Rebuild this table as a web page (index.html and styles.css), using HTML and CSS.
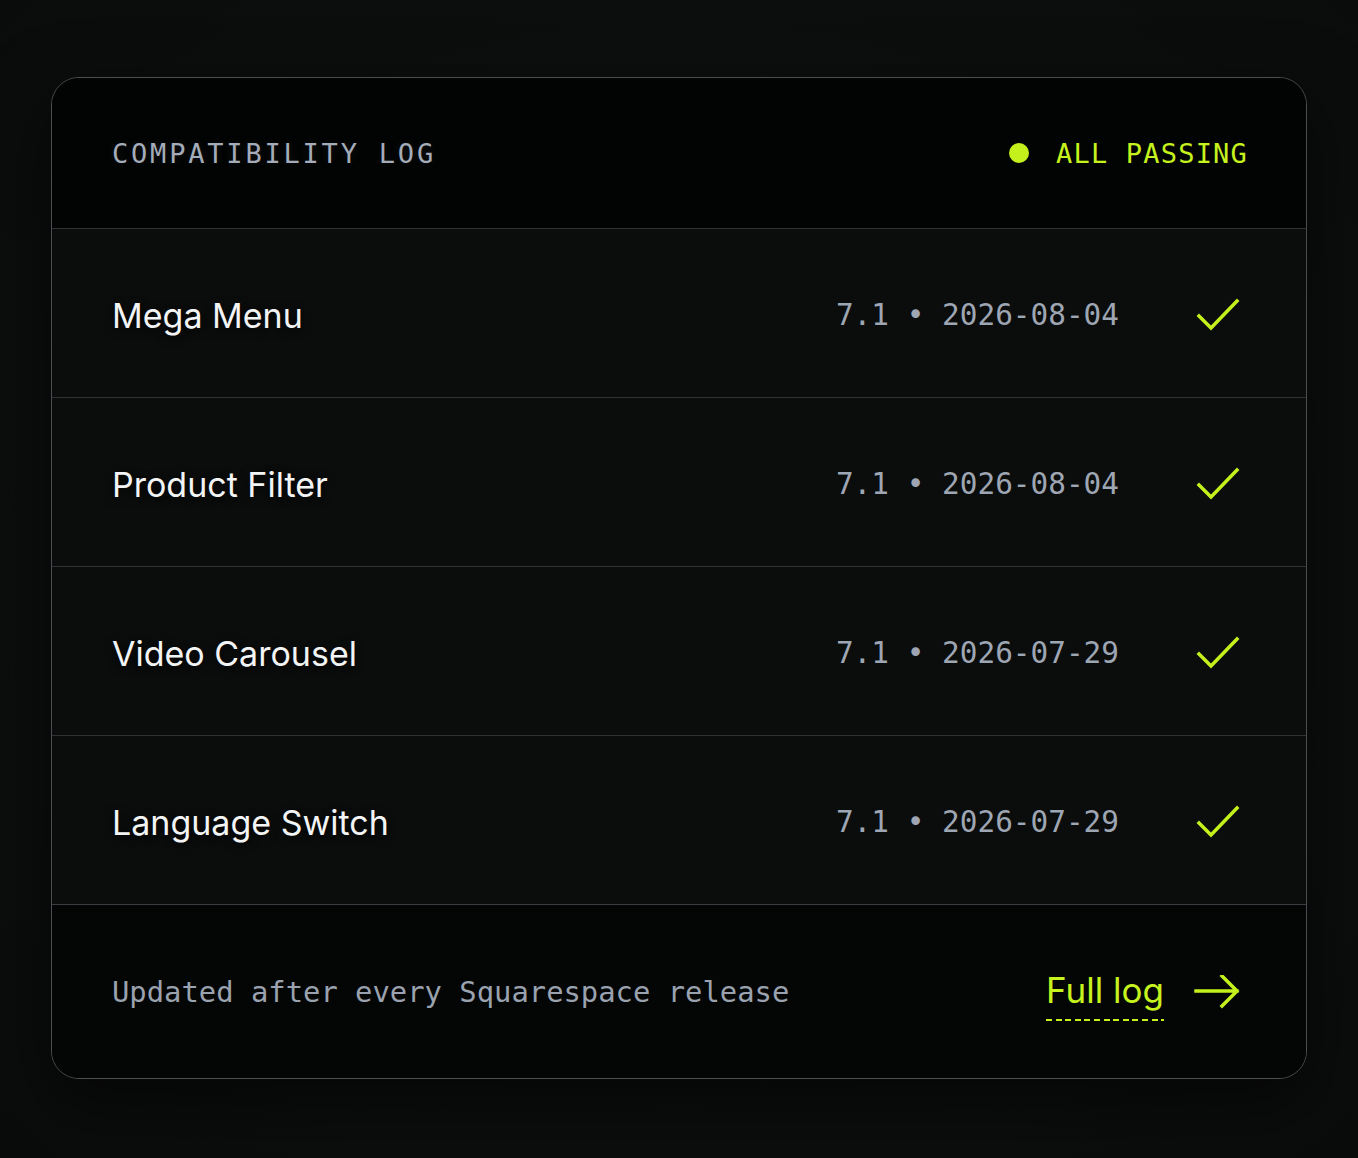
FILE: index.html
```html
<!DOCTYPE html>
<html lang="en">
<head>
<meta charset="utf-8">
<title>Compatibility Log</title>
<link rel="stylesheet" href="styles.css">
</head>
<body>
<section class="card">
  <header class="card-head">
    <h2 class="title">COMPATIBILITY LOG</h2>
    <div class="status"><span class="dot"></span><span class="status-text">ALL PASSING</span></div>
  </header>
  <ul class="rows">
    <li class="row">
      <span class="name">Mega Menu</span>
      <span class="meta">7.1 • 2026-08-04</span>
      <svg class="check" viewBox="0 0 44 34" width="44" height="34"><path d="M3 18 L15 30 L41 3"/></svg>
    </li>
    <li class="row">
      <span class="name">Product Filter</span>
      <span class="meta">7.1 • 2026-08-04</span>
      <svg class="check" viewBox="0 0 44 34" width="44" height="34"><path d="M3 18 L15 30 L41 3"/></svg>
    </li>
    <li class="row">
      <span class="name">Video Carousel</span>
      <span class="meta">7.1 • 2026-07-29</span>
      <svg class="check" viewBox="0 0 44 34" width="44" height="34"><path d="M3 18 L15 30 L41 3"/></svg>
    </li>
    <li class="row">
      <span class="name">Language Switch</span>
      <span class="meta">7.1 • 2026-07-29</span>
      <svg class="check" viewBox="0 0 44 34" width="44" height="34"><path d="M3 18 L15 30 L41 3"/></svg>
    </li>
  </ul>
  <footer class="card-foot">
    <span class="note">Updated after every Squarespace release</span>
    <a class="full-log" href="#"><span class="link-text">Full log</span>
      <svg class="arrow" viewBox="0 0 46 34" width="46" height="34"><path d="M2 16 H43 M28 1 L43 16 L28 31"/></svg>
    </a>
  </footer>
</section>
</body>
</html>
```

FILE: styles.css
```css
* { box-sizing: border-box; }

html, body {
  margin: 0;
  padding: 0;
}

body {
  background: radial-gradient(ellipse at 50% 50%, #0f1010 0%, #0c0d0d 70%, #0a0b0b 100%);
  min-height: 1158px;
  padding: 77px 51px 0;
  font-family: "Inter", "Noto Sans", sans-serif;
}

.card {
  width: 1256px;
  border: 1px solid #4a4d51;
  border-radius: 28px;
  overflow: hidden;
  background: #0b0c0c;
  box-shadow: 0 24px 70px rgba(0, 0, 0, 0.55);
}

.card-head {
  height: 150px;
  display: flex;
  align-items: center;
  justify-content: space-between;
  padding: 0 58px 0 60px;
  background: #020303;
}

.title {
  margin: 0;
  font-family: "DejaVu Sans Mono", "Liberation Mono", monospace;
  font-weight: 400;
  font-size: 27px;
  letter-spacing: 2.8px;
  color: #a4acb9;
  text-shadow: 0 0 10px rgba(150, 160, 175, 0.15);
}

.status {
  display: flex;
  align-items: center;
  gap: 27px;
}

.dot {
  width: 20px;
  height: 20px;
  border-radius: 50%;
  background: #c4f01c;
}

.status-text {
  font-family: "DejaVu Sans Mono", "Liberation Mono", monospace;
  font-size: 27px;
  letter-spacing: 1.2px;
  color: #c6f21e;
}

.rows {
  list-style: none;
  margin: 0;
  padding: 0;
}

.row {
  height: 169px;
  border-top: 1px solid #2f3133;
  display: flex;
  align-items: center;
  padding: 4px 66px 0 60px;
  background: #0b0c0c;
}

.name {
  flex: 1;
  font-size: 34px;
  color: #f3f4f5;
  text-shadow: 0 2px 10px rgba(0, 0, 0, 0.9);
}

.meta {
  font-family: "DejaVu Sans Mono", "Liberation Mono", monospace;
  font-size: 29.4px;
  color: #9ea6b3;
  white-space: pre;
}

.check {
  margin-left: 77px;
  fill: none;
  stroke: #c4f01c;
  stroke-width: 3.5;
  stroke-linecap: square;
  stroke-linejoin: miter;
}

.card-foot {
  height: 174px;
  border-top: 1px solid #3a3d41;
  display: flex;
  align-items: center;
  justify-content: space-between;
  padding: 0 66px 0 60px;
  background: #040505;
}

.note {
  font-family: "DejaVu Sans Mono", "Liberation Mono", monospace;
  font-size: 28.85px;
  color: #9aa2af;
}

.full-log {
  display: flex;
  align-items: center;
  gap: 30px;
  text-decoration: none;
  color: #c6f21e;
}

.link-text {
  position: relative;
  font-size: 35px;
  line-height: 1.2;
  padding-bottom: 4px;
}

.link-text::after {
  content: "";
  position: absolute;
  left: 0;
  right: 0;
  bottom: -6px;
  height: 2px;
  background: repeating-linear-gradient(to right, #c6f21e 0 6px, transparent 6px 9.6px);
}

.arrow {
  fill: none;
  stroke: #c4f01c;
  stroke-width: 3.5;
  stroke-linecap: square;
  stroke-linejoin: miter;
}
```
